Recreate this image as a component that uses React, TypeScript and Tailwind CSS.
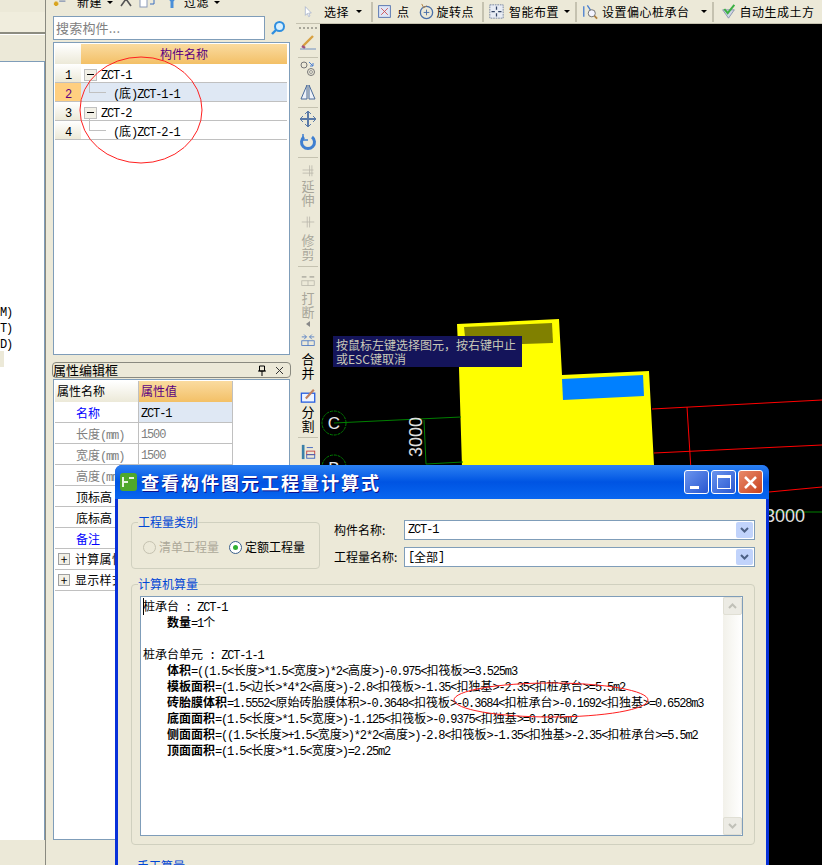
import { ReactNode } from 'react'

const latin = "font-['Liberation_Mono',monospace] text-[12px] tracking-[-1.15px]"

// SimSun look: latin half width (6px), CJK full width (12px)
function Mix({ text }: { text: string }) {
  const parts = text.split(/([\u3000-\u9fff\uff00-\uffef]+)/)
  return (
    <>
      {parts.map((p, i) =>
        i % 2 ? <span key={i}>{p}</span> : <span key={i} className={latin}>{p}</span>
      )}
    </>
  )
}

const treeRows = [
  { no: '1', text: 'ZCT-1', root: true },
  { no: '2', text: '(底)ZCT-1-1', root: false, selected: true },
  { no: '3', text: 'ZCT-2', root: true },
  { no: '4', text: '(底)ZCT-2-1', root: false },
]

const props = [
  { name: '名称', value: 'ZCT-1', color: 'text-[#0000ff]', selected: true, valueColor: 'text-black' },
  { name: '长度(mm)', value: '1500', color: 'text-[#808080]', valueColor: 'text-[#808080]' },
  { name: '宽度(mm)', value: '1500', color: 'text-[#808080]', valueColor: 'text-[#808080]' },
  { name: '高度(mm)', value: '1500', color: 'text-[#808080]', valueColor: 'text-[#808080]' },
  { name: '顶标高', value: '', color: 'text-black', valueColor: 'text-black' },
  { name: '底标高', value: '', color: 'text-black', valueColor: 'text-black' },
  { name: '备注', value: '', color: 'text-[#0000ff]', valueColor: 'text-black' },
]

const calcLines = [
  { value: '桩承台 : ZCT-1' },
  { label: '数量', value: '=1个' },
  { value: ' ' },
  { value: '桩承台单元 : ZCT-1-1' },
  { label: '体积', value: '=((1.5<长度>*1.5<宽度>)*2<高度>)-0.975<扣筏板>=3.525m3' },
  { label: '模板面积', value: '=(1.5<边长>*4*2<高度>)-2.8<扣筏板>-1.35<扣独基>-2.35<扣桩承台>=5.5m2' },
  { label: '砖胎膜体积', value: '=1.5552<原始砖胎膜体积>-0.3648<扣筏板>-0.3684<扣桩承台>-0.1692<扣独基>=0.6528m3' },
  { label: '底面面积', value: '=(1.5<长度>*1.5<宽度>)-1.125<扣筏板>-0.9375<扣独基>=0.1875m2' },
  { label: '侧面面积', value: '=((1.5<长度>+1.5<宽度>)*2*2<高度>)-2.8<扣筏板>-1.35<扣独基>-2.35<扣桩承台>=5.5m2' },
  { label: '顶面面积', value: '=(1.5<长度>*1.5<宽度>)=2.25m2' },
]

function Ico({ children, w = 18, h = 18 }: { children: ReactNode; w?: number; h?: number }) {
  return (
    <svg width={w} height={h} viewBox="0 0 18 18" fill="none" className="shrink-0">
      {children}
    </svg>
  )
}

function Caret({ className = 'mx-[5px]' }: { className?: string }) {
  return <span className={`h-0 w-0 border-x-[3px] border-t-[3px] border-x-transparent border-t-black ${className}`} />
}

function Sep({ className = 'mx-[4px]' }: { className?: string }) {
  return <div className={`h-[20px] w-[2px] bg-[#c5c2b0] ${className}`} />
}

function VSep({ className }: { className: string }) {
  return <div className={`h-px w-[20px] bg-[#c5c2b0] ${className}`} />
}

function VLabel({ a, b, gray, className }: { a: string; b: string; gray?: boolean; className: string }) {
  return (
    <div className={`flex flex-col items-center text-[13px] leading-[14px] ${gray ? 'text-[#a8a69a]' : 'text-black'} ${className}`}>
      <span>{a}</span>
      <span>{b}</span>
    </div>
  )
}

function LeftPanel() {
  return (
    <div className="flex w-[46px] shrink-0 flex-col border-r border-[#8a8a80] bg-[#ece9d8]">
      <div className="mt-[12px] h-[22px] border-b-2 border-[#8c8c80] bg-[#f0eddd]" />
      <div className="h-[27px] border-t border-white" />
      <div className="flex-1 border-t border-r border-[#7f9db9] bg-white pt-[241px] text-black">
        <div className="h-4 leading-4"><Mix text="M)" /></div>
        <div className="h-4 leading-4"><Mix text="T)" /></div>
        <div className="h-4 leading-4"><Mix text="D)" /></div>
        <div className="h-4 w-[4px] bg-[#ece9d8]" />
      </div>
      <div className="h-[25px]" />
    </div>
  )
}

function TreeList() {
  return (
    <div className="mt-[2px] h-[313px] w-[237px] border border-[#7f9db9] bg-white p-px">
      <div className="flex h-[20px] w-[232px]">
        <div className="w-[26px] bg-gradient-to-b from-white to-[#ece9d8]" />
        <div className="flex-1 bg-gradient-to-b from-[#fadb9f] to-[#f3c066] text-center leading-[20px] text-[#5a0080]">构件名称</div>
      </div>
      {treeRows.map((r) => (
        <div key={r.no} className="flex h-[19px] w-[232px] border-b border-[#c0c0c0]">
          <div className={`w-[26px] text-center leading-[20px] ${r.selected ? 'bg-[#ffcf80] text-[#600080]' : 'bg-gradient-to-b from-white to-[#ece9d8] text-black'}`}>
            <span className={latin}>{r.no}</span>
          </div>
          <div className={`flex flex-1 items-center pt-[3px] ${r.selected ? 'bg-[#dfe8f4]' : 'bg-white'}`}>
            {r.root ? (
              <>
                <div className="ml-[3px] flex h-[12px] w-[13px] items-center justify-center border border-[#c0c0c0] bg-[#f2f0e6]">
                  <div className="h-px w-[7px] bg-black" />
                </div>
                <span className="ml-[4px]"><Mix text={r.text} /></span>
              </>
            ) : (
              <>
                <div className="-mt-[6px] ml-[8px] h-[13px] w-[17px] self-start border-b border-l border-[#c0c0c0]" />
                <span className="ml-[7px]"><Mix text={r.text} /></span>
              </>
            )}
          </div>
        </div>
      ))}
    </div>
  )
}

function PropGrid() {
  return (
    <div className="mt-px h-[461px] w-[237px] border border-[#7f9db9] bg-white p-px">
      <div className="grid w-[178px] grid-cols-[84px_94px]">
        <div className="h-[21px] bg-gradient-to-b from-white to-[#ece9d8] pl-[2px] leading-[20px] border-r border-[#c0c0c0]">属性名称</div>
        <div className="h-[21px] bg-gradient-to-b from-[#fadb9f] to-[#f3c066] pl-[2px] leading-[20px] text-[#5a0080] border-r border-[#c0c0c0]">属性值</div>
        {props.map((p) => (
          <div key={p.name} className="contents">
            <div className={`h-[21px] border-r border-b border-[#c0c0c0] pl-[21px] leading-[21px] ${p.color}`}><Mix text={p.name} /></div>
            <div className={`h-[21px] border-r border-b border-[#c0c0c0] pl-[2px] leading-[20px] ${p.valueColor} ${p.selected ? 'bg-[#dfe8f4]' : ''}`}><Mix text={p.value} /></div>
          </div>
        ))}
      </div>
      {['计算属性', '显示样式'].map((t) => (
        <div key={t} className="flex h-[21px] w-[232px] items-center border-b border-[#c0c0c0]">
          <div className="ml-[3px] flex h-[12px] w-[12px] items-center justify-center border border-[#a0a0a0] bg-[#f2f0e6] text-[12px] leading-[10px]">+</div>
          <span className="ml-[5px] tracking-[0.3px]">{t}</span>
        </div>
      ))}
    </div>
  )
}

function MidPanel() {
  return (
    <div className="flex w-[250px] shrink-0 flex-col overflow-hidden pl-[7px]">
      <div className="-mt-[10px] flex h-[24px] items-center text-[12px] tracking-[0.5px]">
        <Ico w={16} h={16}>
          <path d="M1 11h5M3.5 8.5v5" stroke="#d9a520" strokeWidth="3" />
          <path d="M7 5h10M7 8h7" stroke="#7f8fb0" strokeWidth="1.2" />
        </Ico>
        <span className="ml-[8px]">新建</span>
        <Caret />
        <svg width="14" height="10" viewBox="0 0 14 10" className="ml-px"><path d="M2 9L7 2l5 7" stroke="#555" strokeWidth="1.6" fill="none" /></svg>
        <svg width="16" height="14" viewBox="0 0 16 14" className="ml-[6px]"><rect x="1" y="1" width="7" height="11" fill="#fff" stroke="#8a9ab8" /><path d="M10 3h5v6h-4" stroke="#3a6fc0" fill="none" /></svg>
        <svg width="14" height="14" viewBox="0 0 14 14" className="ml-[10px]"><path d="M1 1h12L8.5 6.5V13h-3V6.5z" fill="#4a8fd8" /></svg>
        <span className="ml-[5px]">过滤</span>
        <Caret />
      </div>
      <div className="mt-[2px] flex h-[24px] items-center">
        <div className="h-full w-[212px] border border-[#7f9db9] bg-white pl-[2px] text-[13px] leading-[21px] tracking-[0.2px] text-[#808080]">搜索构件...</div>
        <svg width="16" height="16" viewBox="0 0 16 16" className="ml-[5px]">
          <circle cx="9.5" cy="6.5" r="4.5" fill="#d8f0ff" stroke="#2f8fe0" strokeWidth="2" />
          <path d="M6 10l-4 4" stroke="#2f8fe0" strokeWidth="2.4" />
        </svg>
      </div>
      <TreeList />
      <div className="-ml-px mt-[7px] flex h-[16px] w-[239px] items-center rounded-sm border border-[#8a8a80] pr-[6px] text-[13px] leading-[14px]">
        <span>属性编辑框</span>
        <svg width="10" height="11" viewBox="0 0 10 11" className="ml-auto"><path d="M2.5 1h5v5h-5zM1 6h8M5 6v5" stroke="#000" fill="none" /></svg>
        <svg width="9" height="9" viewBox="0 0 9 9" className="ml-[8px]"><path d="M1 1l7 7M8 1L1 8" stroke="#333" /></svg>
      </div>
      <PropGrid />
    </div>
  )
}

function TopToolbar() {
  return (
    <div className="flex h-[24px] shrink-0 items-center overflow-hidden whitespace-nowrap border-b border-[#c5c2b0] bg-[#ece9d8] pl-[8px] text-[12px] tracking-[0.5px]">
      <Ico w={12} h={16}><path d="M2 1v13l3-3 2 5 2-1-2-4.500h4z" fill="#fff" stroke="#9aa8c8" /></Ico>
      <span className="ml-[8px]">选择</span>
      <Caret className="ml-[7px] mr-[5px]" />
      <Sep />
      <Ico w={15} h={15}><rect x="2" y="2" width="14" height="14" fill="#dfe6f6" stroke="#4466aa" /><path d="M5 5l8 8M13 5l-8 8" stroke="#cc4444" /></Ico>
      <span className="ml-[5px]">点</span>
      <span className="ml-[8px]" />
      <Ico w={17} h={17}><circle cx="9" cy="10" r="6.500" stroke="#4a6fa8" strokeWidth="1.4" /><path d="M9 7v6M6 10h6" stroke="#4a6fa8" /><path d="M4 1l2 4 3-2" stroke="#b08040" /></Ico>
      <span className="ml-[2px]">旋转点</span>
      <Sep className="ml-[8px] mr-[4px]" />
      <span className="ml-px" />
      <Ico w={15} h={15}><rect x="1" y="1" width="16" height="16" fill="#e8ecf4" stroke="#667799" strokeDasharray="2 1" /><path d="M9 3v4M9 11v4M3 9h4M11 9h4" stroke="#334466" strokeWidth="1.5" /></Ico>
      <span className="ml-[5px]">智能布置</span>
      <Caret />
      <Sep className="mr-[4px]" />
      <span className="ml-px" />
      <Ico w={16} h={17}><path d="M2 3v12M6 2l4 6" stroke="#4a7fd0" strokeWidth="1.5" /><circle cx="11" cy="11" r="4" fill="#f4f4ff" stroke="#666" /><path d="M14 14l3 3" stroke="#b08040" strokeWidth="2" /></Ico>
      <span className="ml-[4px]">设置偏心桩承台</span>
      <Caret className="ml-[11px] mr-[5px]" />
      <Sep className="mr-[4px]" />
      <span className="ml-[2px]" />
      <Ico w={17} h={15}><path d="M2 7l7 10 7-10z" fill="#cfd6e4" stroke="#7f8ca8" /><path d="M4 6l4 5 8-10" stroke="#3cb043" strokeWidth="2.400" /></Ico>
      <span className="ml-[3px]">自动生成土方</span>
    </div>
  )
}

function VToolbar() {
  return (
    <div className="flex w-[24px] shrink-0 flex-col items-center overflow-hidden bg-[#ece9d8]">
      <div className="mt-[2px] flex h-[6px] gap-[2px]">
        {[0, 1, 2, 3, 4].map((i) => <div key={i} className="mt-[1px] h-[2px] w-[2px] bg-[#a8a69a]" />)}
      </div>
      <div className="mt-[1px] h-[20px]">
        <Ico><path d="M4 13L14 3" stroke="#d8a040" strokeWidth="2.400" /><path d="M3 13l3 2" stroke="#a05080" strokeWidth="2.400" /><path d="M1 16h16" stroke="#7090c0" /></Ico>
      </div>
      <VSep className="mt-[4px]" />
      <div className="mt-[2px] h-[20px]">
        <Ico><circle cx="5" cy="5" r="3" stroke="#777" /><circle cx="12" cy="12" r="3.500" stroke="#777" /><circle cx="12" cy="12" r="1.500" stroke="#999" /><path d="M10 2l4 4M14 3v3h-3" stroke="#4a7fd0" /></Ico>
      </div>
      <div className="mt-[3px] h-[20px]">
        <Ico><path d="M8 2v14H2zM10 2v14h6z" fill="#eef2f8" stroke="#4a6a9a" /></Ico>
      </div>
      <VSep className="mt-[4px]" />
      <div className="mt-[2px] h-[20px]">
        <Ico><path d="M9 2v14M2 9h14" stroke="#5a7aa8" strokeWidth="2" /><path d="M6 4l3-3 3 3M6 14l3 3 3-3M4 6L1 9l3 3M14 6l3 3-3 3" stroke="#5a7aa8" /></Ico>
      </div>
      <div className="mt-[3px] h-[20px]">
        <Ico><path d="M5 4a6.500 6.500 0 1 0 8 0" stroke="#3f7fd0" strokeWidth="3" /><path d="M4 1v6h5" stroke="#3f7fd0" strokeWidth="1.500" /></Ico>
      </div>
      <VSep className="mt-[4px]" />
      <div className="mt-[5px] h-[15px]">
        <Ico w={16} h={14}><path d="M2 9h14M2 13h14M14 3v14M11 3v14" stroke="#b8b6aa" /></Ico>
      </div>
      <VLabel a="延" b="伸" gray className="mt-[1px]" />
      <div className="mt-[8px] h-[15px]">
        <Ico w={16} h={14}><path d="M1 9h16M8 2v14M11 2v14" stroke="#b8b6aa" /></Ico>
      </div>
      <VLabel a="修" b="剪" gray className="mt-[3px]" />
      <VSep className="mt-[5px]" />
      <div className="mt-[6px] h-[15px]">
        <Ico w={16} h={14}><path d="M1 5h6M11 5h6" stroke="#b8b6aa" strokeWidth="2" /><rect x="1" y="10" width="16" height="6" stroke="#b8b6aa" /><path d="M9 10v6" stroke="#b8b6aa" /></Ico>
      </div>
      <VLabel a="打" b="断" gray className="mt-[3px]" />
      <div className="mt-[2px] h-0 w-0 border-y-[3px] border-r-[4px] border-y-transparent border-r-[#888]" />
      <div className="mt-[6px] h-[15px]">
        <Ico w={16} h={14}><path d="M1 5h6M4 2l3 3-3 3M17 5h-6M14 2l-3 3 3 3" stroke="#3f6fc0" /><rect x="1" y="10" width="16" height="6" stroke="#3f6fc0" /><path d="M9 10v6" stroke="#3f6fc0" /></Ico>
      </div>
      <VLabel a="合" b="并" className="mt-[4px]" />
      <div className="mt-[7px] h-[16px]">
        <Ico w={17} h={16}><rect x="1" y="7" width="15" height="10" fill="#eef4ff" stroke="#2a5fe0" strokeWidth="1.500" /><path d="M6 13L15 3" stroke="#c08060" strokeWidth="2.400" /></Ico>
      </div>
      <VLabel a="分" b="割" className="mt-[2px]" />
      <VSep className="mt-[4px]" />
      <div className="mt-[6px] h-[16px]">
        <Ico w={17} h={16}><path d="M3 1v16" stroke="#3a80a8" strokeWidth="3" /><rect x="7" y="8" width="9" height="4" stroke="#c04040" /><rect x="7" y="12" width="9" height="4" stroke="#3a60c0" /><path d="M14 4H7" stroke="#3a60c0" /></Ico>
      </div>
    </div>
  )
}

function Canvas() {
  return (
    <div className="relative min-w-0 flex-1 bg-black">
      <svg viewBox="320 24 502 841" className="block h-full w-full">
        <path d="M457 324L559 319L562 375L649 371L654 465L654 500L463 500L459 368z" fill="#ffff00" />
        <path d="M464 327L552 323L553 343L466 346z" fill="#808000" />
        <path d="M562 379L643 375L644 396L563 400z" fill="#0080ff" />
        <path d="M652 409L822 400M654 453L822 445M687 407L691 470M769 492L822 487" stroke="#ff0000" strokeWidth="1" fill="none" />
        <path d="M334 423L461 417M424 420L426 464M426 464L463 462M769 512L822 512" stroke="#008000" strokeWidth="1" fill="none" />
        <circle cx="334" cy="423" r="12" fill="none" stroke="#008000" strokeDasharray="3 1" />
        <circle cx="334" cy="467" r="12" fill="none" stroke="#008000" strokeDasharray="3 1" />
        <text x="334" y="429" textAnchor="middle" fontFamily="Liberation Sans" fontSize="17" fill="#e8e8e8">C</text>
        <text x="334" y="474" textAnchor="middle" fontFamily="Liberation Sans" fontSize="17" fill="#e8e8e8">B</text>
        <text transform="translate(422 457) rotate(-90)" fontFamily="Liberation Sans" fontSize="18" fill="#e0e0e0">3000</text>
        <text x="765" y="522" fontFamily="Liberation Sans" fontSize="18" fill="#e0e0e0">3000</text>
      </svg>
      <div className="absolute left-[13px] top-[312px] h-[31px] w-[189px] bg-[#14145a] pl-[3px] pt-[2px] text-[12px] leading-[14px] text-[#c8c8b8]">
        <div>按鼠标左键选择图元，按右键中止</div>
        <div>或ESC键取消</div>
      </div>
    </div>
  )
}

function WinButton({ children, red }: { children: ReactNode; red?: boolean }) {
  return (
    <div className={`flex h-[24px] w-[25px] items-center justify-center rounded-[3px] border border-white ${red ? 'bg-gradient-to-br from-[#e88a6a] to-[#c8401a]' : 'bg-gradient-to-br from-[#6a94ee] to-[#2a56d0]'}`}>
      {children}
    </div>
  )
}

function Combo({ text }: { text: string }) {
  return (
    <div className="flex h-[20px] w-[351px] items-center border border-[#7f9db9] bg-white pl-[3px]">
      <Mix text={text} />
      <div className="ml-auto mr-px flex h-[16px] w-[17px] items-center justify-center rounded-[2px] bg-[#c1d3fb]">
        <svg width="9" height="7" viewBox="0 0 9 7"><path d="M1 1l3.500 3.500L8 1" stroke="#4d6185" strokeWidth="2" fill="none" /></svg>
      </div>
    </div>
  )
}

function Dialog() {
  return (
    <div className="absolute left-[115px] top-[465px] h-[420px] w-[654px] rounded-t-[7px] bg-[#0831d9] px-[3px]">
      <div className="-mx-[3px] flex h-[34px] items-center rounded-t-[7px] bg-gradient-to-b from-[#2b80f2] via-[#0054e3] to-[#0a66f0] pl-[5px] pr-[6px]">
        <svg width="17" height="18" viewBox="0 0 17 18">
          <rect x="0" y="0" width="17" height="18" rx="3" fill="#4fa82a" />
          <path d="M3 4v10M3 9h5M9 5h5" stroke="#e8f5e0" strokeWidth="2" />
        </svg>
        <span className="ml-[4px] text-[18px] font-bold tracking-[2px] text-white [text-shadow:1px_1px_#0f1089]">查看构件图元工程量计算式</span>
        <div className="ml-auto flex gap-[2px]">
          <WinButton><div className="mt-[10px] mr-[4px] h-[3px] w-[9px] bg-white" /></WinButton>
          <WinButton><div className="h-[14px] w-[14px] border border-t-[3px] border-white" /></WinButton>
          <WinButton red>
            <svg width="15" height="15" viewBox="0 0 15 15"><path d="M2 2l11 11M13 2L2 13" stroke="#fff" strokeWidth="2.500" /></svg>
          </WinButton>
        </div>
      </div>
      <div className="h-[386px] bg-[#ece9d8] pl-[13px] pr-[11px] pt-[16px]">
        <div className="flex">
          <fieldset className="h-[54px] w-[189px] rounded-[4px] border border-[#d0d0bf] pl-[11px]">
            <legend className="-ml-[5px] text-[12px] leading-[14px] text-[#0046d5]">工程量类别</legend>
            <div className="mt-[9px] flex items-center">
              <div className="h-[13px] w-[13px] rounded-full border border-[#c5c2b0]" />
              <span className="ml-[3px] text-[#aca899]">清单工程量</span>
              <div className="ml-[10px] flex h-[13px] w-[13px] items-center justify-center rounded-full border border-[#3a5f8a] bg-white">
                <div className="h-[5px] w-[5px] rounded-full bg-[#30b030]" />
              </div>
              <span className="ml-[3px]">定额工程量</span>
            </div>
          </fieldset>
          <div className="ml-[14px] flex flex-col gap-[7px] pt-[5px]">
            <div className="flex items-center">
              <span className="w-[70px]">构件名称:</span>
              <Combo text="ZCT-1" />
            </div>
            <div className="flex items-center">
              <span className="w-[70px]">工程量名称:</span>
              <Combo text="[全部]" />
            </div>
          </div>
        </div>
        <fieldset className="mt-[8px] h-[268px] w-[624px] rounded-[4px] border border-[#d0d0bf] pl-[8px]">
          <legend className="-ml-[2px] text-[12px] leading-[14px] text-[#0046d5]">计算机算量</legend>
          <div className="relative mt-[5px] flex h-[240px] w-[603px] border border-[#7f9db9] bg-white">
            <div className="absolute left-[2px] top-[1px] h-[17px] w-px bg-black" />
            <div className="flex-1 whitespace-pre pl-[2px] pt-px">
              {calcLines.map((l, i) => (
                <div key={i} className={`h-[16px] leading-[16px] ${l.label ? 'pl-[24px]' : ''}`}>
                  {l.label ? <span className="font-bold">{l.label}</span> : null}
                  <Mix text={l.value} />
                </div>
              ))}
            </div>
            <div className="flex w-[19px] flex-col justify-between bg-gradient-to-r from-[#f2f1ea] to-white">
              <div className="flex h-[18px] items-center justify-center rounded-[2px] border border-[#e0dfd4] bg-[#ecebe4]">
                <svg width="9" height="7" viewBox="0 0 9 7"><path d="M1 5l3.500-3.500L8 5" stroke="#c0c0b8" strokeWidth="2" fill="none" /></svg>
              </div>
              <div className="flex h-[18px] items-center justify-center rounded-[2px] border border-[#e0dfd4] bg-[#ecebe4]">
                <svg width="9" height="7" viewBox="0 0 9 7"><path d="M1 1l3.500 3.500L8 1" stroke="#c0c0b8" strokeWidth="2" fill="none" /></svg>
              </div>
            </div>
          </div>
        </fieldset>
        <div className="ml-[6px] mt-[14px] text-[12px] leading-[14px] text-[#0046d5]">手工算量</div>
      </div>
    </div>
  )
}

export default function App() {
  return (
    <div className="relative flex h-[865px] w-[822px] overflow-hidden bg-[#ece9d8] font-['Noto_Sans_CJK_SC','Liberation_Sans',sans-serif] text-[12px] text-black">
      <LeftPanel />
      <MidPanel />
      <div className="flex w-[526px] min-w-0 shrink-0 flex-col">
        <TopToolbar />
        <div className="flex min-h-0 flex-1">
          <VToolbar />
          <Canvas />
        </div>
      </div>
      <Dialog />
      {/* red marks drawn over the screenshot */}
      <svg viewBox="0 0 822 865" className="pointer-events-none absolute inset-0 h-full w-full">
        <ellipse cx="141" cy="110" rx="61" ry="53" fill="none" stroke="#ff2020" />
        <ellipse cx="551" cy="700" rx="97" ry="17" fill="none" stroke="#ff2020" />
      </svg>
    </div>
  )
}
